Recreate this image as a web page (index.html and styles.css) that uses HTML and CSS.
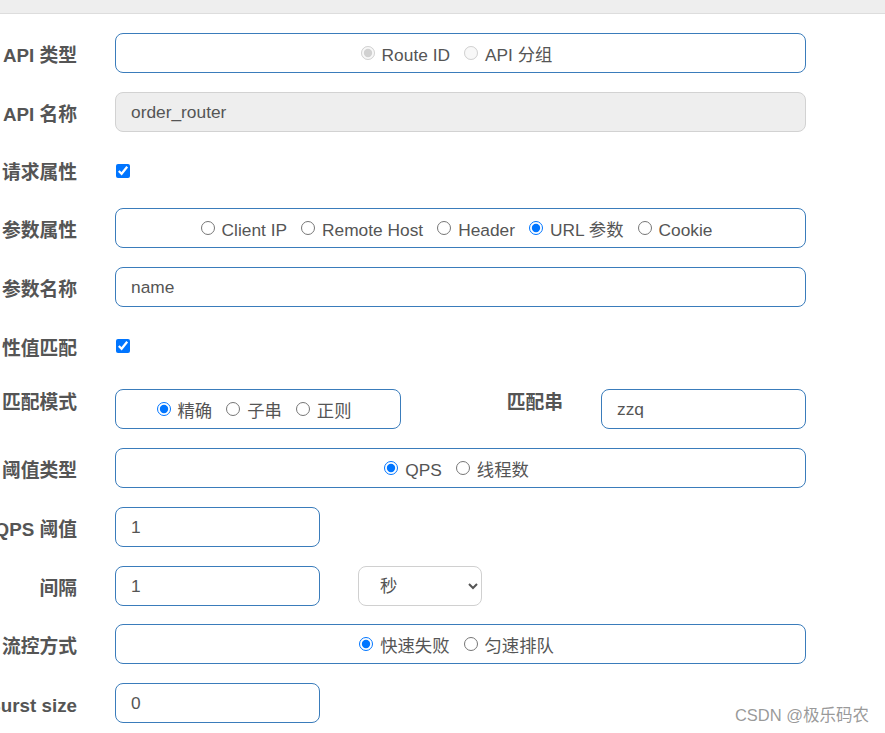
FILE: index.html
```html
<!DOCTYPE html>
<html lang="zh-CN">
<head>
<meta charset="utf-8">
<title>流控规则</title>
<link rel="stylesheet" href="styles.css">
</head>
<body>
<div class="topbar"></div>
<form class="form">
  <div class="row">
    <div class="label"><span>API 类型</span></div>
    <div class="box radios">
      <label class="opt"><input type="radio" name="t" checked disabled><span>Route ID</span></label>
      <label class="opt"><input type="radio" name="t" disabled><span>API 分组</span></label>
    </div>
  </div>
  <div class="row">
    <div class="label"><span>API 名称</span></div>
    <div class="box input disabled">order_router</div>
  </div>
  <div class="row check-row">
    <div class="label"><span>请求属性</span></div>
    <div class="check"><input type="checkbox" checked></div>
  </div>
  <div class="row">
    <div class="label"><span>参数属性</span></div>
    <div class="box radios">
      <label class="opt"><input type="radio" name="p"><span>Client IP</span></label>
      <label class="opt"><input type="radio" name="p"><span>Remote Host</span></label>
      <label class="opt"><input type="radio" name="p"><span>Header</span></label>
      <label class="opt"><input type="radio" name="p" checked><span>URL 参数</span></label>
      <label class="opt"><input type="radio" name="p"><span>Cookie</span></label>
    </div>
  </div>
  <div class="row">
    <div class="label"><span>参数名称</span></div>
    <div class="box input">name</div>
  </div>
  <div class="row check-row tall">
    <div class="label"><span>性值匹配</span></div>
    <div class="check"><input type="checkbox" checked></div>
  </div>
  <div class="row">
    <div class="label top"><span>匹配模式</span></div>
    <div class="split">
      <div class="box radios">
        <label class="opt"><input type="radio" name="m" checked><span>精确</span></label>
        <label class="opt"><input type="radio" name="m"><span>子串</span></label>
        <label class="opt"><input type="radio" name="m"><span>正则</span></label>
      </div>
      <div class="label top sub"><span>匹配串</span></div>
      <div class="box input">zzq</div>
    </div>
  </div>
  <div class="row">
    <div class="label"><span>阈值类型</span></div>
    <div class="box radios">
      <label class="opt"><input type="radio" name="g" checked><span>QPS</span></label>
      <label class="opt"><input type="radio" name="g"><span>线程数</span></label>
    </div>
  </div>
  <div class="row">
    <div class="label"><span>QPS 阈值</span></div>
    <div class="pair">
      <div class="box input">1</div>
    </div>
  </div>
  <div class="row">
    <div class="label"><span>间隔</span></div>
    <div class="pair">
      <div class="box input">1</div>
      <select class="select"><option>秒</option></select>
    </div>
  </div>
  <div class="row row-tight">
    <div class="label"><span>流控方式</span></div>
    <div class="box radios">
      <label class="opt"><input type="radio" name="c" checked><span>快速失败</span></label>
      <label class="opt"><input type="radio" name="c"><span>匀速排队</span></label>
    </div>
  </div>
  <div class="row">
    <div class="label"><span>Burst size</span></div>
    <div class="pair">
      <div class="box input">0</div>
    </div>
  </div>
</form>
<div class="watermark">CSDN @极乐码农</div>
</body>
</html>
```

FILE: styles.css
```css
html, body {
  margin: 0;
  padding: 0;
  background: #ffffff;
}
body {
  font-family: "Liberation Sans", Arial, "Noto Sans CJK SC", sans-serif;
  color: #555555;
  width: 885px;
  height: 733px;
  overflow: hidden;
  position: relative;
}
.topbar {
  height: 13px;
  background: #eeeeee;
  border-bottom: 1px solid #dddddd;
}
.form {
  width: 806px;
  padding-top: 19px;
  display: flex;
  flex-direction: column;
  gap: 19px;
}
.row {
  display: grid;
  grid-template-columns: 77px 691px;
  column-gap: 38px;
  height: 40px;
}
.row-tight {
  margin-top: -1px;
}
.check-row {
  height: 38px;
}
.check-row.tall {
  height: 44px;
}
.check-row.tall .check {
  padding-top: 0;
  margin-top: -4px;
}
.check-row.tall .label {
  padding-top: 1px;
}
.label {
  display: flex;
  justify-content: flex-end;
  align-items: center;
  padding-top: 5px;
  box-sizing: border-box;
  white-space: nowrap;
  font-weight: bold;
  font-size: 18.8px;
  line-height: 20px;
  color: #555555;
}
.label.top {
  align-items: flex-start;
  padding-top: 4px;
}
.box {
  box-sizing: border-box;
  height: 40px;
  border: 1px solid #3a7cbb;
  border-radius: 8px;
  background: #ffffff;
  font-size: 17.33px;
  color: #555555;
}
.input {
  display: flex;
  align-items: center;
  padding: 0 15px;
}
.input.disabled {
  background: #eeeeee;
  border-color: #d2d2d2;
}
.radios {
  display: flex;
  align-items: center;
  justify-content: center;
  gap: 14px;
  padding-right: 8px;
}
.opt {
  display: flex;
  align-items: center;
  gap: 7px;
  white-space: nowrap;
}
.opt input {
  width: 14px;
  height: 14px;
  margin: 0 0 0 0;
}
.opt span {
  line-height: 20px;
  padding-top: 4px;
}
.check {
  display: flex;
  align-items: center;
  padding-top: 1px;
  padding-left: 1px;
}
.check input {
  width: 14px;
  height: 14px;
  margin: 0;
}
.split {
  display: grid;
  grid-template-columns: 286px 1fr 205px;
}
.split .label.sub {
  padding-right: 38px;
}
.pair {
  display: flex;
  gap: 38px;
}
.pair .input {
  width: 205px;
}
.select {
  box-sizing: border-box;
  width: 124px;
  height: 40px;
  border: 1px solid #d0d0d0;
  border-radius: 8px;
  background: #ffffff;
  color: #555555;
  font-family: "Liberation Sans", Arial, "Noto Sans CJK SC", sans-serif;
  font-size: 17.33px;
  padding: 0 8px 0 17px;
}
.watermark {
  position: absolute;
  right: 16px;
  top: 702px;
  font-size: 16.5px;
  color: rgba(120, 120, 120, 0.75);
  font-family: "Liberation Sans", Arial, "Noto Sans CJK SC", sans-serif;
}
```
